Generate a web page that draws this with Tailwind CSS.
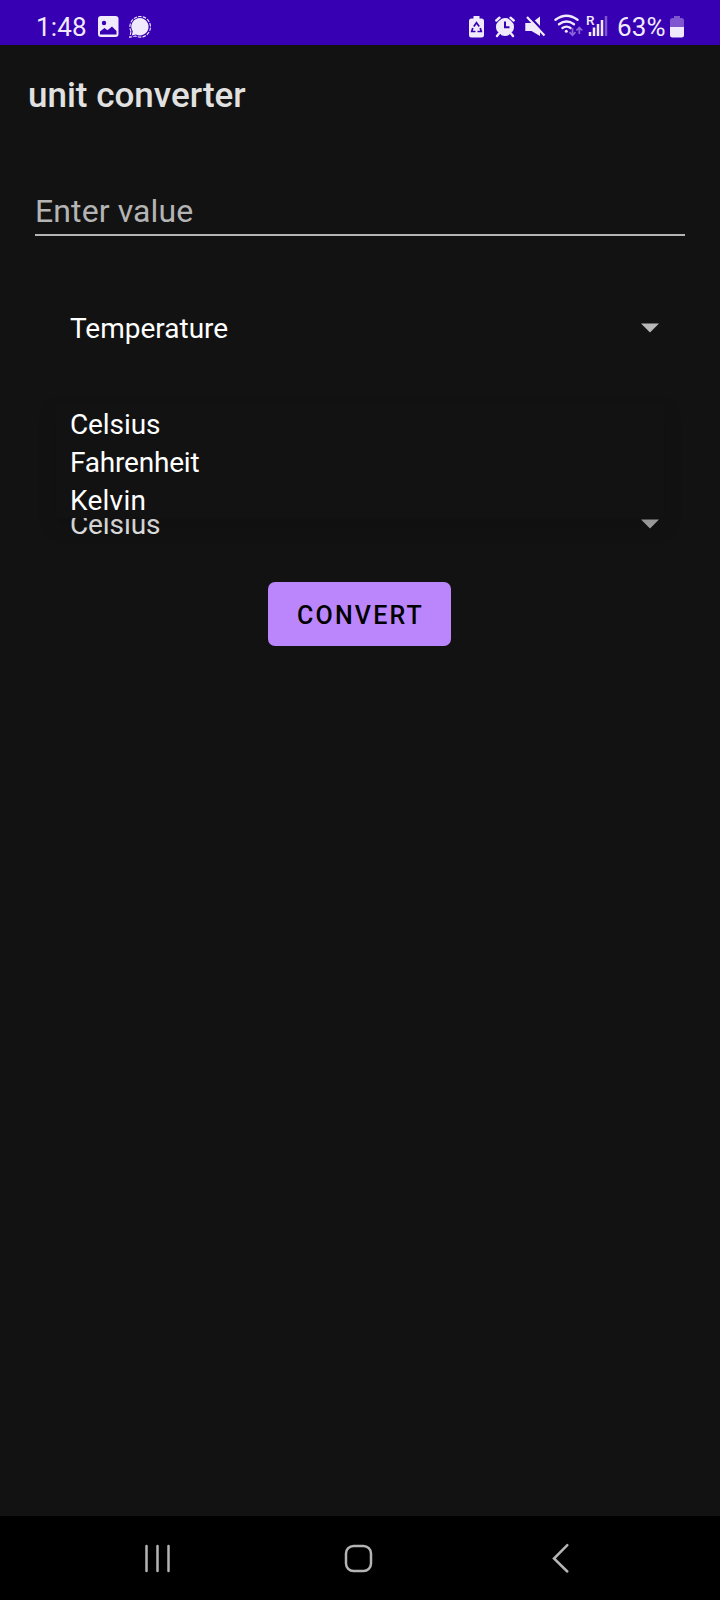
<!DOCTYPE html>
<html lang="en">
<head>
<meta charset="utf-8">
<title>unit converter</title>
<script src="https://cdn.jsdelivr.net/npm/@tailwindcss/browser@4"></script>
</head>
<body class="bg-[#121212] font-['Roboto',sans-serif] text-white">
<div class="flex h-[1600px] w-[720px] flex-col overflow-hidden bg-[#121212]">
  <header class="flex h-[45px] shrink-0 justify-between bg-[#3700b3] pr-[35px] pl-[36px] text-[#f1eafc]">
    <div class="flex">
      <span class="w-[61px] pt-[12px] text-[26px] leading-[30px] tracking-[0.2px]">1:48</span>
      <svg class="h-[45px] w-[24px]" viewBox="97 0 24 45">
        <rect x="98" y="16" width="20.500" height="21" rx="3" fill="currentColor"/>
        <circle cx="104" cy="23" r="2.200" fill="#3700b3"/>
        <path d="M100 34.500V31.500L104.500 28L107.500 30.300L112 26.500L116.500 31V34.500Z" fill="#3700b3"/>
      </svg>
      <svg class="ml-[7px] h-[45px] w-[24px]" viewBox="128 0 24 45">
        <path d="M140 18A8.700 8.700 0 1 1 136 34.500L131.800 35.500L132.800 31.500A8.700 8.700 0 0 1 140 18Z" fill="currentColor"/>
        <path d="M131 31.500A10.300 10.300 0 1 1 135.500 36L129.800 37.200Z" fill="none" stroke="currentColor" stroke-width="1.100" stroke-dasharray="3.500 1.200"/>
      </svg>
    </div>
    <div class="flex">
      <svg class="h-[45px] w-[18px]" viewBox="468 0 18 45">
        <path d="M473.500 16H479.500V18.500H481.500Q484 18.500 484 21V35Q484 37.500 481.500 37.500H471.500Q469 37.500 469 35V21Q469 18.500 471.500 18.500H473.500Z" fill="currentColor"/>
        <g fill="none" stroke="#3700b3" stroke-width="1.700"><path d="M473.800 26.500L476.500 22.800L479.200 26.500"/><path d="M480.200 28L481.300 31.500H477.500"/><path d="M475.500 31.500H471.700L472.800 28"/></g>
      </svg>
      <svg class="ml-[8px] h-[45px] w-[22px]" viewBox="494 0 22 45">
        <circle cx="505" cy="27" r="9" fill="currentColor"/>
        <path d="M496.300 20.500L499.500 17.700M513.700 20.500L510.500 17.700M499 33.500L497 36M511 33.500L513 36" stroke="#3700b3" stroke-width="4.500" stroke-linecap="round"/>
        <circle cx="505" cy="27" r="8.600" fill="currentColor"/>
        <path d="M496.300 20.500L499.500 17.700M513.700 20.500L510.500 17.700M499 33.500L497 36M511 33.500L513 36" stroke="currentColor" stroke-width="2.400" stroke-linecap="round"/>
        <path d="M505 21.500V27.300H509.500" fill="none" stroke="#3700b3" stroke-width="2"/>
      </svg>
      <svg class="ml-[8px] h-[45px] w-[22px]" viewBox="524 0 22 45">
        <path d="M525.300 23H531.500L540 16.500V36L531.500 31H525.300Z" fill="currentColor"/>
        <path d="M528.500 15.500L546.500 34.500" stroke="#3700b3" stroke-width="2.400"/>
        <path d="M527 17L544.500 35.500" stroke="currentColor" stroke-width="2.200"/>
      </svg>
      <svg class="ml-[8px] h-[45px] w-[29px]" viewBox="554 0 29 45">
        <g fill="none" stroke="currentColor" stroke-width="2.400" stroke-linecap="round"><path d="M555.500 19.800Q566.500 11.800 577.500 19.800"/><path d="M559 24.200Q566.500 18.800 574 24.200"/><path d="M562.500 28Q566.500 25.200 570.500 28"/></g>
        <circle cx="566.300" cy="31.300" r="1.500" fill="currentColor"/>
        <path d="M572.500 28V35M569.500 32.200L572.500 35.200L575.500 32.200M579.300 34V28M576.300 30.500L579.300 27.500L582.300 30.500" fill="none" stroke="#8b64d5" stroke-width="1.700"/>
      </svg>
      <svg class="ml-[3px] h-[45px] w-[23px]" viewBox="586 0 23 45">
        <text x="586" y="25" font-size="13.500" font-weight="500" fill="currentColor">R</text>
        <path d="M590 32V36M594 27.500V36M598 24V36M602 20V36" stroke="currentColor" stroke-width="2.500"/>
        <path d="M606 16V36" stroke="#7f55d0" stroke-width="2.500"/>
      </svg>
      <span class="ml-[8px] w-[52px] pt-[12px] text-[26px] leading-[30px] tracking-[0.2px]">63%</span>
      <svg class="h-[45px] w-[16px]" viewBox="669 0 16 45">
        <path d="M674 16H680V18H681.500Q684 18 684 20.500V27H670V20.500Q670 18 672.500 18H674Z" fill="#7f55d0"/>
        <path d="M670 27H684V35Q684 37.500 681.500 37.500H672.500Q670 37.500 670 35Z" fill="currentColor"/>
      </svg>
    </div>
  </header>

  <h1 class="h-[98px] shrink-0 pt-[31px] pl-[28px] text-[35px] leading-[40px] font-medium text-[#e1e1e1]">unit converter</h1>

  <main class="flex flex-1 flex-col">
    <div class="mx-[35px] mt-[45px] h-[48px] shrink-0 border-b-2 border-[#b4b4b4] pt-[3px] text-[32px] leading-[40px] tracking-[0.1px] text-[#b4b4b4]">Enter value</div>

    <div class="mt-[72px] flex h-[42px] shrink-0 items-center justify-between pr-[60px] pl-[70px] text-[28px] leading-[40px]">
      <span>Temperature</span>
      <svg class="mb-[2px] h-[10px] w-[19px]" viewBox="0 0 19 10"><path d="M0 0.500H18L9 9.500Z" fill="#b8b8b8"/></svg>
    </div>

    <div class="relative mt-[154px] flex h-[42px] shrink-0 items-center justify-between pr-[60px] pl-[70px] text-[28px] leading-[40px] text-[#e4e4e4]">
      <span class="tracking-[-0.1px]">Celsius</span>
      <svg class="mb-[2px] h-[10px] w-[19px]" viewBox="0 0 19 10"><path d="M0 0.500H18L9 9.500Z" fill="#a5a5a5"/></svg>
      <ul class="absolute bottom-[28px] left-[56px] h-[114px] w-[608px] rounded-[3px] bg-[#121212] pt-[2px] pl-[14px] leading-[38px] text-white shadow-[0_8px_20px_rgba(0,0,0,0.14)]">
        <li class="h-[38px] tracking-[-0.1px]">Celsius</li>
        <li class="h-[38px] tracking-[-0.2px]">Fahrenheit</li>
        <li class="h-[36px] tracking-[0.25px]">Kelvin</li>
      </ul>
    </div>

    <button class="mt-[36px] ml-[268px] h-[64px] w-[183px] shrink-0 rounded-[7px] bg-[#bb86fc] pt-[3px] pl-[2px] text-[25px] leading-[30px] font-medium tracking-[2.2px] text-black">CONVERT</button>
  </main>

  <nav class="flex h-[84px] shrink-0 bg-black pl-[144px] text-[#b4b4b4]">
    <svg class="mt-[28px] h-[30px] w-[28px]" viewBox="144 1544 28 30"><path d="M146.500 1546V1571M157.500 1546V1571M168.500 1546V1571" stroke="currentColor" stroke-width="2.500" stroke-linecap="round"/></svg>
    <svg class="mt-[27px] ml-[171px] h-[31px] w-[31px]" viewBox="343 1543 31 31"><rect x="346" y="1546" width="25" height="25" rx="7.500" fill="none" stroke="currentColor" stroke-width="2.500"/></svg>
    <svg class="mt-[27px] ml-[176px] h-[31px] w-[21px]" viewBox="550 1543 21 31"><path d="M567.300 1545.200L554 1558.500L567.300 1571.500" fill="none" stroke="currentColor" stroke-width="2.500" stroke-linecap="round"/></svg>
  </nav>
</div>
</body>
</html>
